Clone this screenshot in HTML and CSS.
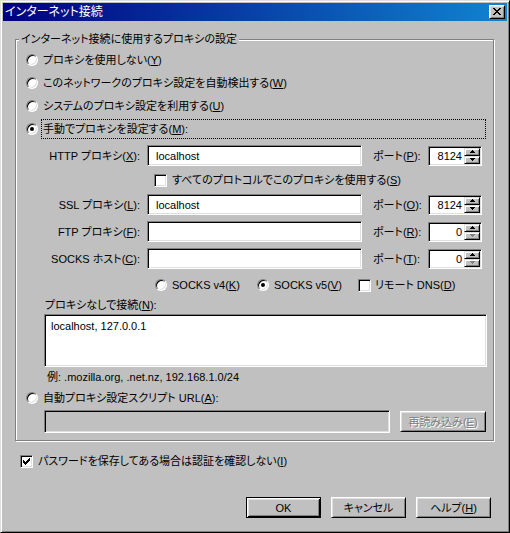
FILE: index.html
```html
<!doctype html>
<html lang="ja">
  <head>
    <meta charset="UTF-8" />
    <title>インターネット接続</title>
    <link rel="stylesheet" href="styles.css">
  </head>

  <body>
    <div class="window">
      <div class="titlebar">
        <span class="title">インターネット接続</span>
        <button type="button" class="close">
          <svg width="8" height="7" viewBox="0 0 8 7"><path d="M0 0h2v1h-2zM6 0h2v1h-2zM1 1h2v1h-2zM5 1h2v1h-2zM2 2h4v1h-4zM3 3h2v1h-2zM2 4h4v1h-4zM1 5h2v1h-2zM5 5h2v1h-2zM0 6h2v1h-2zM6 6h2v1h-2z"/></svg>
        </button>
      </div>

      <div class="client">
        <div class="group">
          <div class="group-title">インターネット接続に使用するプロキシの設定</div>

          <div class="option"><span class="radio"></span><span class="label">プロキシを使用しない(<u>Y</u>)</span></div>
          <div class="option"><span class="radio"></span><span class="label">このネットワークのプロキシ設定を自動検出する(<u>W</u>)</span></div>
          <div class="option"><span class="radio"></span><span class="label">システムのプロキシ設定を利用する(<u>U</u>)</span></div>
          <div class="option"><span class="radio checked"></span><span class="label focus">手動でプロキシを設定する(<u>M</u>):</span></div>

          <div class="proxy-row first">
            <label class="proxy-label">HTTP プロキシ(<u>X</u>):</label>
            <input class="text-input" type="text" value="localhost" />
            <label class="port-label">ポート(<u>P</u>):</label>
            <div class="spin">
              <input class="spin-value" type="text" value="8124" />
              <div class="spin-buttons">
                <span class="spin-btn"><svg width="5" height="3"><path d="M2 0h1v1h-1zM1 1h3v1h-3zM0 2h5v1h-5z"/></svg></span>
                <span class="spin-btn"><svg width="5" height="3"><path d="M0 0h5v1h-5zM1 1h3v1h-3zM2 2h1v1h-1z"/></svg></span>
              </div>
            </div>
          </div>

          <div class="check-row">
            <span class="checkbox"></span>
            <span class="check-text">すべてのプロトコルでこのプロキシを使用する(<u>S</u>)</span>
          </div>

          <div class="proxy-row">
            <label class="proxy-label">SSL プロキシ(<u>L</u>):</label>
            <input class="text-input" type="text" value="localhost" />
            <label class="port-label">ポート(<u>O</u>):</label>
            <div class="spin">
              <input class="spin-value" type="text" value="8124" />
              <div class="spin-buttons">
                <span class="spin-btn"><svg width="5" height="3"><path d="M2 0h1v1h-1zM1 1h3v1h-3zM0 2h5v1h-5z"/></svg></span>
                <span class="spin-btn"><svg width="5" height="3"><path d="M0 0h5v1h-5zM1 1h3v1h-3zM2 2h1v1h-1z"/></svg></span>
              </div>
            </div>
          </div>

          <div class="proxy-row spaced">
            <label class="proxy-label">FTP プロキシ(<u>F</u>):</label>
            <input class="text-input" type="text" value="" />
            <label class="port-label">ポート(<u>R</u>):</label>
            <div class="spin">
              <input class="spin-value" type="text" value="0" />
              <div class="spin-buttons">
                <span class="spin-btn"><svg width="5" height="3"><path d="M2 0h1v1h-1zM1 1h3v1h-3zM0 2h5v1h-5z"/></svg></span>
                <span class="spin-btn off"><svg width="5" height="3"><path d="M0 0h5v1h-5zM1 1h3v1h-3zM2 2h1v1h-1z"/></svg></span>
              </div>
            </div>
          </div>

          <div class="proxy-row spaced">
            <label class="proxy-label">SOCKS ホスト(<u>C</u>):</label>
            <input class="text-input" type="text" value="" />
            <label class="port-label">ポート(<u>T</u>):</label>
            <div class="spin">
              <input class="spin-value" type="text" value="0" />
              <div class="spin-buttons">
                <span class="spin-btn"><svg width="5" height="3"><path d="M2 0h1v1h-1zM1 1h3v1h-3zM0 2h5v1h-5z"/></svg></span>
                <span class="spin-btn off"><svg width="5" height="3"><path d="M0 0h5v1h-5zM1 1h3v1h-3zM2 2h1v1h-1z"/></svg></span>
              </div>
            </div>
          </div>

          <div class="socks-row">
            <div class="socks-opt v4"><span class="radio"></span><span class="socks-text">SOCKS v4(<u>K</u>)</span></div>
            <div class="socks-opt v5"><span class="radio checked"></span><span class="socks-text">SOCKS v5(<u>V</u>)</span></div>
            <div class="socks-opt"><span class="checkbox"></span><span class="socks-text dns">リモート DNS(<u>D</u>)</span></div>
          </div>

          <div class="noproxy-label">プロキシなしで接続(<u>N</u>):</div>
          <textarea class="noproxy">localhost, 127.0.0.1</textarea>
          <div class="example">例: .mozilla.org, .net.nz, 192.168.1.0/24</div>

          <div class="option auto"><span class="radio"></span><span class="label">自動プロキシ設定スクリプト URL(<u>A</u>):</span></div>
          <div class="url-row">
            <input class="url-input" type="text" value="" disabled />
            <button type="button" class="btn reload" disabled>再読み込み(<u>E</u>)</button>
          </div>
        </div>

        <div class="password-row">
          <span class="checkbox checked">
            <svg width="7" height="7" viewBox="0 0 7 7"><path d="M6 0h1v1h-1zM5 1h2v1h-2zM0 2h1v1h-1zM4 2h3v1h-3zM0 3h2v1h-2zM3 3h3v1h-3zM0 4h5v1h-5zM1 5h3v1h-3zM2 6h1v1h-1z"/></svg>
          </span>
          <span class="check-text">パスワードを保存してある場合は認証を確認しない(<u>I</u>)</span>
        </div>

        <div class="buttons">
          <button type="button" class="btn default">OK</button>
          <button type="button" class="btn">キャンセル</button>
          <button type="button" class="btn">ヘルプ(<u>H</u>)</button>
        </div>
      </div>
    </div>
  </body>
</html>
```

FILE: styles.css
```css
* {
  margin: 0;
  padding: 0;
  box-sizing: border-box;
}

body {
  width: 510px;
  height: 533px;
  background: #c0c0c0;
  color: #000;
  font-family: 'Liberation Sans', 'Noto Sans CJK JP', sans-serif;
  font-size: 11px;
  line-height: 14px;
  font-feature-settings: 'palt';
}

input,
textarea,
button {
  font: inherit;
  color: inherit;
}

u {
  text-decoration: underline;
  text-underline-offset: 1px;
}

/* window frame */
.window {
  width: 510px;
  height: 533px;
  padding: 2px;
  border: 1px solid;
  border-color: #dfdfdf #000 #000 #dfdfdf;
  box-shadow: inset 1px 1px #fff, inset -1px -1px #808080;
  background: #c0c0c0;
}

.titlebar {
  height: 18px;
  display: flex;
  align-items: center;
  padding-left: 2px;
  background: linear-gradient(to right, #000080, #1084d0);
  color: #fff;
  font-size: 12px;
}

.close {
  margin-left: auto;
  margin-right: 2px;
  width: 16px;
  height: 14px;
  display: flex;
  padding: 3px 0 0 4px;
  background: #c0c0c0;
  border: 1px solid;
  border-color: #fff #000 #000 #fff;
  box-shadow: inset 1px 1px #dfdfdf, inset -1px -1px #808080;
}

.close svg {
  display: block;
  margin: -1px 0 0 -1px;
}

.client {
  padding: 18px 13px 0 12px;
}

/* etched group box */
.group {
  position: relative;
  width: 479px;
  border: 1px solid #808080;
  box-shadow: inset 1px 1px #fff, 1px 1px #fff;
  padding: 8px 0 7px;
}

.group-title {
  position: absolute;
  top: -8px;
  left: 3px;
  padding: 0 2px;
  background: #c0c0c0;
}

/* radio + checkbox */
.radio {
  flex: none;
  position: relative;
  width: 12px;
  height: 12px;
  border-radius: 50%;
  background: #fff;
  border: 1px solid;
  border-color: #808080 #fff #fff #808080;
  box-shadow: inset 1px 1px #000, inset -1px -1px #dfdfdf;
}

.radio.checked::after {
  content: '';
  position: absolute;
  left: 3px;
  top: 3px;
  width: 4px;
  height: 4px;
  border-radius: 50%;
  background: #000;
}

.checkbox {
  flex: none;
  display: flex;
  width: 13px;
  height: 13px;
  padding: 2px 0 0 2px;
  background: #fff;
  border: 1px solid;
  border-color: #808080 #fff #fff #808080;
  box-shadow: inset 1px 1px #000, inset -1px -1px #dfdfdf;
}

.checkbox svg {
  display: block;
}

.option {
  display: flex;
  align-items: center;
  height: 23px;
  padding-left: 10px;
}

.option .label {
  margin-left: 3px;
  padding: 2px 1px;
  border: 1px dotted transparent;
}

.option .label.focus {
  flex: 1;
  margin-right: 7px;
  border-color: #000;
}

.option.auto {
  height: 21px;
}

/* proxy fields */
.proxy-row {
  display: flex;
  align-items: center;
  height: 21px;
}

.proxy-row.first {
  margin-top: 5px;
}

.proxy-row.spaced {
  margin-top: 6px;
}

.proxy-label {
  width: 124px;
  text-align: right;
}

.text-input,
.url-input,
.noproxy {
  background: #fff;
  border: 1px solid;
  border-color: #808080 #fff #fff #808080;
  box-shadow: inset 1px 1px #000, inset -1px -1px #dfdfdf;
  outline: none;
}

.text-input {
  margin-left: 7px;
  width: 215px;
  height: 21px;
  padding: 0 8px;
}

.port-label {
  margin-left: 11px;
  width: 55px;
}

.spin {
  display: flex;
  width: 54px;
  height: 20px;
  padding: 1px;
  background: #fff;
  border: 1px solid;
  border-color: #808080 #fff #fff #808080;
  box-shadow: inset 1px 1px #000, inset -1px -1px #dfdfdf;
}

.spin-value {
  width: 34px;
  border: none;
  outline: none;
  background: transparent;
  text-align: right;
  padding-right: 2px;
}

.spin-buttons {
  display: flex;
  flex-direction: column;
  width: 16px;
}

.spin-btn {
  display: flex;
  align-items: center;
  justify-content: center;
  height: 8px;
  background: #c0c0c0;
  border: 1px solid;
  border-color: #dfdfdf #000 #000 #dfdfdf;
  box-shadow: inset 1px 1px #fff, inset -1px -1px #808080;
}

.spin-btn svg {
  display: block;
  fill: #000;
}

.spin-btn.off svg {
  fill: #808080;
}

.check-row {
  display: flex;
  align-items: center;
  height: 28px;
  padding-left: 138px;
}

.check-text {
  margin-left: 5px;
}

.socks-row {
  display: flex;
  align-items: center;
  height: 22px;
  margin-top: 5px;
  padding-left: 139px;
}

.socks-opt {
  display: flex;
  align-items: center;
}

.socks-opt.v4 {
  width: 102px;
}

.socks-opt.v5 {
  width: 101px;
}

.socks-text {
  margin-left: 5px;
}

.socks-text.dns {
  margin-left: 4px;
}

.noproxy-label {
  height: 18px;
  line-height: 18px;
  padding-left: 29px;
}

.noproxy {
  display: block;
  margin-left: 28px;
  width: 443px;
  height: 53px;
  padding: 4px 6px;
  resize: none;
}

.example {
  height: 20px;
  line-height: 20px;
  padding-left: 31px;
}

.url-row {
  display: flex;
  align-items: center;
  height: 23px;
  margin-top: 2px;
  padding-left: 28px;
}

.url-input {
  width: 346px;
  height: 23px;
  background: #c0c0c0;
}

/* push buttons */
.btn {
  height: 21px;
  width: 75px;
  background: #c0c0c0;
  border: 1px solid;
  border-color: #fff #000 #000 #fff;
  box-shadow: inset 1px 1px #dfdfdf, inset -1px -1px #808080;
  text-align: center;
}

.btn.default {
  border-color: #000;
  box-shadow: inset 1px 1px #fff, inset -1px -1px #000, inset 2px 2px #dfdfdf, inset -2px -2px #808080;
}

.btn.reload {
  margin-left: 10px;
  width: 86px;
  color: #808080;
  text-shadow: 1px 1px #fff;
}

.password-row {
  display: flex;
  align-items: center;
  height: 20px;
  margin-top: 10px;
  padding-left: 5px;
}

.buttons {
  display: flex;
  justify-content: flex-end;
  gap: 10px;
  margin-top: 26px;
  padding-right: 3px;
}
```
